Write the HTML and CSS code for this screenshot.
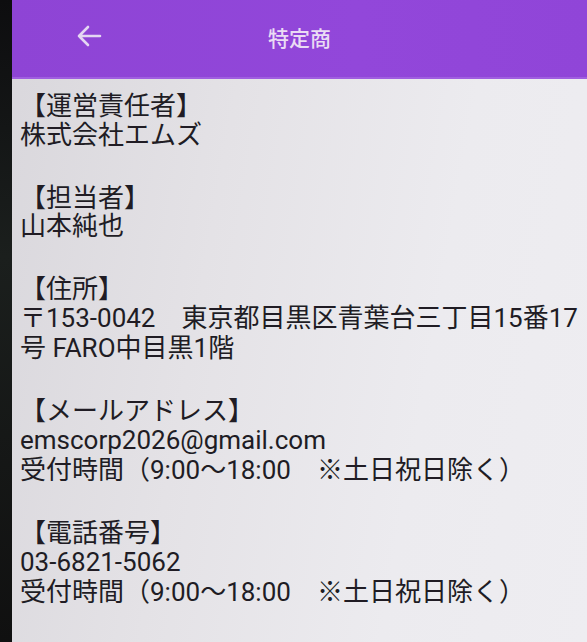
FILE: index.html
```html
<!DOCTYPE html>
<html lang="ja">
<head>
<meta charset="utf-8">
<link rel="stylesheet" href="styles.css">
</head>
<body>
<div class="phone">
  <div class="edge"></div>
  <div class="screen">
    <header class="appbar">
      <svg class="back" width="26" height="22" viewBox="0 0 26 22" aria-hidden="true">
        <path d="M24 11H3M12 2L3 11L12 20" fill="none" stroke="currentColor" stroke-width="2.6" stroke-linecap="round" stroke-linejoin="round"/>
      </svg>
      <h1 class="title">特定商</h1>
    </header>
    <main class="content">
      <section class="item">
        <p class="label">【運営責任者】</p>
        <p>株式会社エムズ</p>
      </section>
      <section class="item">
        <p class="label">【担当者】</p>
        <p>山本純也</p>
      </section>
      <section class="item">
        <p class="label">【住所】</p>
        <p>〒153-0042　東京都目黒区青葉台三丁目15番17号 FARO中目黒1階</p>
      </section>
      <section class="item">
        <p class="label">【メールアドレス】</p>
        <p>emscorp2026@gmail.com</p>
        <p>受付時間（9:00〜18:00　※土日祝日除く）</p>
      </section>
      <section class="item">
        <p class="label">【電話番号】</p>
        <p>03-6821-5062</p>
        <p>受付時間（9:00〜18:00　※土日祝日除く）</p>
      </section>
    </main>
  </div>
</div>
</body>
</html>
```

FILE: styles.css
```css
* { box-sizing: border-box; }
html, body {
  margin: 0;
  padding: 0;
  width: 587px;
  height: 642px;
  overflow: hidden;
  background: #141414;
}
.phone {
  display: flex;
  width: 587px;
  height: 642px;
}
.edge {
  flex: 0 0 12px;
  background: linear-gradient(180deg, #0d0d0f 0%, #1b1f1d 40%, #101010 100%);
}
.screen {
  flex: 1;
  display: flex;
  flex-direction: column;
  background: linear-gradient(100deg, #d9d7dc 0%, #e4e2e6 35%, #ecebef 70%, #eeedf1 100%);
  overflow: hidden;
}
.appbar {
  flex: 0 0 79px;
  display: flex;
  align-items: center;
  position: relative;
  background: linear-gradient(90deg, #8e44d5 0%, #9247da 60%, #9045d8 100%);
  border-bottom: 2px solid #a05fe0;
  padding-bottom: 6px;
  color: #eadcf4;
}
.back {
  margin-left: 64px;
  color: #e4d6f2;
}
.title {
  position: absolute;
  left: 0;
  right: 0;
  top: 22px;
  margin: 0;
  text-align: center;
  font-family: "Noto Sans CJK JP", "Noto Sans", sans-serif;
  font-size: 21px;
  font-weight: 500;
  line-height: 30px;
  color: #eadcf4;
}
.content {
  padding: 10px 0 0 8px;
  display: flex;
  flex-direction: column;
  gap: 30.5px;
  font-family: Roboto, "Noto Sans CJK JP", sans-serif;
  font-size: 26px;
  line-height: 30.5px;
  color: #201c24;
}
.item p {
  margin: 0;
  white-space: nowrap;
}
.item p:not(.label) {
  white-space: normal;
  width: 566px;
}
.label {
  font-family: "Noto Sans CJK JP", sans-serif;
}
```
